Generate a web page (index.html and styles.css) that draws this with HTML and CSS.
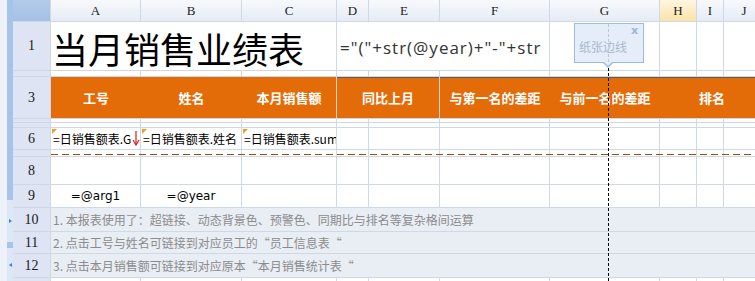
FILE: index.html
```html
<!DOCTYPE html>
<html lang="zh-CN">
<head>
    <meta charset="UTF-8">
    <title>当月销售业绩表</title>
    <link rel="stylesheet" href="styles.css">
</head>
<body>
    <!-- outline strip on the left -->
    <div class="strip">
        <div class="strip-box"><span class="tri-right"></span></div>
        <div class="strip-box low"><span class="tri-left"></span></div>
    </div>

    <div class="sheet">
        <!-- column headers -->
        <div class="corner"></div>
        <div class="colhead">A</div>
        <div class="colhead">B</div>
        <div class="colhead">C</div>
        <div class="colhead">D</div>
        <div class="colhead">E</div>
        <div class="colhead">F</div>
        <div class="colhead">G</div>
        <div class="colhead active">H</div>
        <div class="colhead">I</div>
        <div class="colhead">J</div>

        <!-- row 1 -->
        <div class="rowhead">1</div>
        <div class="c title">当月销售业绩表</div>
        <div class="c formula">="("+str(@year)+"-"+str</div>
        <div class="c"></div><div class="c"></div><div class="c"></div><div class="c"></div>

        <!-- row 2 -->
        <div class="rowhead"></div>
        <div class="c"></div><div class="c"></div><div class="c"></div><div class="c"></div><div class="c"></div>
        <div class="c"></div><div class="c"></div><div class="c"></div><div class="c"></div><div class="c"></div>

        <!-- row 3 : table header -->
        <div class="rowhead">3</div>
        <div class="head-row">
            <div class="hd w-a">工号</div>
            <div class="hd w-b">姓名</div>
            <div class="hd w-c">本月销售额</div>
            <div class="hd w-de split top">同比上月</div>
            <div class="hd w-f split top">与第一名的差距</div>
            <div class="hd w-g top">与前一名的差距</div>
            <div class="hd w-hj top">排名</div>
        </div>

        <!-- row 4 -->
        <div class="rowhead"></div>
        <div class="c"></div><div class="c"></div><div class="c"></div><div class="c"></div><div class="c"></div>
        <div class="c"></div><div class="c"></div><div class="c"></div><div class="c"></div><div class="c"></div>

        <!-- row 5 -->
        <div class="rowhead"></div>
        <div class="c"></div><div class="c"></div><div class="c"></div><div class="c"></div><div class="c"></div>
        <div class="c"></div><div class="c"></div><div class="c"></div><div class="c"></div><div class="c"></div>

        <!-- row 6 : data -->
        <div class="rowhead">6</div>
        <div class="c data mark">=日销售额表.G<svg class="arrow" width="8" height="15" viewBox="0 0 8 15"><path d="M4 0 V13" stroke="#e01818" stroke-width="1.2"/><path d="M1 9 L4 14 L7 9" fill="none" stroke="#e01818" stroke-width="1.2"/></svg></div>
        <div class="c data mark">=日销售额表.姓名</div>
        <div class="c data mark">=日销售额表.sum</div>
        <div class="c"></div><div class="c"></div><div class="c"></div><div class="c"></div>
        <div class="c"></div><div class="c"></div><div class="c"></div>

        <!-- row 7 -->
        <div class="rowhead"></div>
        <div class="c"></div><div class="c"></div><div class="c"></div><div class="c"></div><div class="c"></div>
        <div class="c"></div><div class="c"></div><div class="c"></div><div class="c"></div><div class="c"></div>

        <!-- row 8 -->
        <div class="rowhead">8</div>
        <div class="c"></div><div class="c"></div><div class="c"></div><div class="c"></div><div class="c"></div>
        <div class="c"></div><div class="c"></div><div class="c"></div><div class="c"></div><div class="c"></div>

        <!-- row 9 -->
        <div class="rowhead">9</div>
        <div class="c param">=@arg1</div>
        <div class="c param">=@year</div>
        <div class="c"></div><div class="c"></div><div class="c"></div><div class="c"></div>
        <div class="c"></div><div class="c"></div><div class="c"></div><div class="c"></div>

        <!-- notes -->
        <div class="rowhead">10</div>
        <div class="c note">1. 本报表使用了：超链接、动态背景色、预警色、同期比与排名等复杂格间运算</div>
        <div class="rowhead">11</div>
        <div class="c note">2. 点击工号与姓名可链接到对应员工的“员工信息表“</div>
        <div class="rowhead">12</div>
        <div class="c note">3. 点击本月销售额可链接到对应原本“本月销售统计表“</div>

        <!-- row 13 -->
        <div class="rowhead"></div>
        <div class="c"></div><div class="c"></div><div class="c"></div><div class="c"></div><div class="c"></div>
        <div class="c"></div><div class="c"></div><div class="c"></div><div class="c"></div><div class="c"></div>
    </div>

    <!-- page break lines and paper edge tip -->
    <div class="break-h"></div>
    <div class="break-v"></div>
    <div class="tip">
        <span class="tip-line"></span>
        <span class="tip-close">x</span>
        纸张边线
    </div>
</body>
</html>
```

FILE: styles.css
```css
body {
    margin: 0;
    width: 755px;
    height: 281px;
    overflow: hidden;
    display: flex;
    background-color: #ffffff;
    font-family: "Noto Sans CJK SC", sans-serif;
    position: relative;
}

/* left outline strip */
.strip {
    flex: 0 0 13px;
    height: 281px;
    display: flex;
    flex-direction: column;
    align-items: flex-end;
    gap: 6px;
    padding-top: 200px;
    box-sizing: border-box;
    background: linear-gradient(to right, #eef2f8 0, #eef2f8 7px, #a6c4ea 7px, #a6c4ea 13px);
}

.strip-box {
    width: 6px;
    height: 42px;
    background-color: #dce8f7;
    display: flex;
    align-items: center;
    justify-content: center;
}

.strip-box.low {
    height: 33px;
}

.tri-right {
    border-left: 3px solid #4a7cc0;
    border-top: 2px solid transparent;
    border-bottom: 2px solid transparent;
}

.tri-left {
    border-right: 3px solid #4a7cc0;
    border-top: 2px solid transparent;
    border-bottom: 2px solid transparent;
}

/* spreadsheet grid */
.sheet {
    display: grid;
    grid-template-columns: 37px 89px 100px 94px 31px 70px 109px 109px 36px 26px 40px;
    grid-template-rows: 21px 48px 5px 41px 3px 4px 21px 6px 27px 22px 23px 21px 23px 3px;
    gap: 1px;
    background-color: #d0d7e5;
    align-self: flex-start;
}

.corner {
    background: linear-gradient(#b3cbeb, #a5c0e6);
}

.colhead {
    background: linear-gradient(#f7f9fc, #e6ebf4);
    font-family: "Liberation Serif", serif;
    font-size: 13px;
    color: #222;
    display: flex;
    align-items: center;
    justify-content: center;
}

.colhead.active {
    background: linear-gradient(#fef6e0, #fbe2a8);
}

.rowhead {
    background-color: #dee4f3;
    font-family: "Liberation Serif", serif;
    font-size: 14px;
    color: #1a1a1a;
    display: flex;
    align-items: center;
    justify-content: center;
}

.c {
    background-color: #ffffff;
    position: relative;
    overflow: hidden;
    white-space: nowrap;
}

.title {
    grid-column: 2 / 5;
    font-size: 36px;
    line-height: 40px;
    color: #000;
    display: flex;
    align-items: center;
    padding: 3px 0 0 1px;
    overflow: visible;
}

.formula {
    grid-column: 5 / 8;
    font-family: "Open Sans", sans-serif;
    font-size: 17px;
    letter-spacing: 1px;
    color: #333;
    display: flex;
    align-items: center;
    padding: 2px 0 0 3px;
}

/* orange header row */
.head-row {
    grid-column: 2 / -1;
    display: flex;
    background-color: #e36c09;
}

.hd {
    color: #ffffff;
    font-size: 13px;
    font-weight: bold;
    display: flex;
    align-items: center;
    justify-content: center;
    white-space: nowrap;
    box-sizing: border-box;
}

.hd.top {
    box-shadow: inset 0 1px 0 #5e5a58;
}

.hd.split {
    border-left: 1px solid #e9d6cb;
}

.w-a { flex: 0 0 90px; }
.w-b { flex: 0 0 101px; }
.w-c { flex: 0 0 94px; }
.w-de { flex: 0 0 103px; }
.w-f { flex: 0 0 111px; }
.w-g { flex: 0 0 110px; }
.w-hj { flex: 1; }

.data {
    font-size: 12px;
    color: #000;
    display: flex;
    align-items: center;
    padding-left: 2px;
}

.mark::before {
    content: "";
    position: absolute;
    top: 1px;
    left: 1px;
    border-top: 5px solid #f0a020;
    border-right: 5px solid transparent;
}

.arrow {
    position: absolute;
    left: 81px;
    top: 3px;
}

.param {
    font-family: "DejaVu Sans", sans-serif;
    font-size: 12px;
    color: #000;
    display: flex;
    align-items: center;
    justify-content: center;
}

.note {
    grid-column: 2 / -1;
    background-color: #e9edf4;
    font-size: 12px;
    color: #8c8c8c;
    display: flex;
    align-items: center;
    padding-left: 2px;
}

/* page break lines */
.break-h {
    position: absolute;
    left: 51px;
    right: 0;
    top: 154px;
    height: 1px;
    background: repeating-linear-gradient(to right, #94501a 0, #94501a 7px, transparent 7px, transparent 11px);
}

.break-v {
    position: absolute;
    left: 608px;
    top: 63px;
    bottom: 0;
    width: 1px;
    background: repeating-linear-gradient(to bottom, #000 0, #000 3px, transparent 3px, transparent 5px);
}

/* paper edge tip */
.tip {
    position: absolute;
    left: 574px;
    top: 23px;
    width: 70px;
    height: 40px;
    box-sizing: border-box;
    background-color: #e4edf8;
    border: 1px solid #9dbae0;
    font-size: 12px;
    color: #aab9cc;
    padding: 14px 0 0 4px;
}

.tip::before {
    content: "";
    position: absolute;
    left: 28px;
    bottom: -6px;
    border-top: 5px solid #9dbae0;
    border-left: 5px solid transparent;
    border-right: 5px solid transparent;
}

.tip::after {
    content: "";
    position: absolute;
    left: 29px;
    bottom: -4px;
    border-top: 4px solid #e4edf8;
    border-left: 4px solid transparent;
    border-right: 4px solid transparent;
}

.tip-line {
    position: absolute;
    left: 33px;
    top: 0;
    bottom: 0;
    width: 1px;
    background: repeating-linear-gradient(to bottom, #b9c7d9 0, #b9c7d9 3px, transparent 3px, transparent 5px);
}

.tip-close {
    position: absolute;
    top: 0;
    right: 5px;
    font-family: "DejaVu Sans", sans-serif;
    font-size: 11px;
    font-weight: bold;
    line-height: 13px;
    color: #9cb6d8;
}
```
